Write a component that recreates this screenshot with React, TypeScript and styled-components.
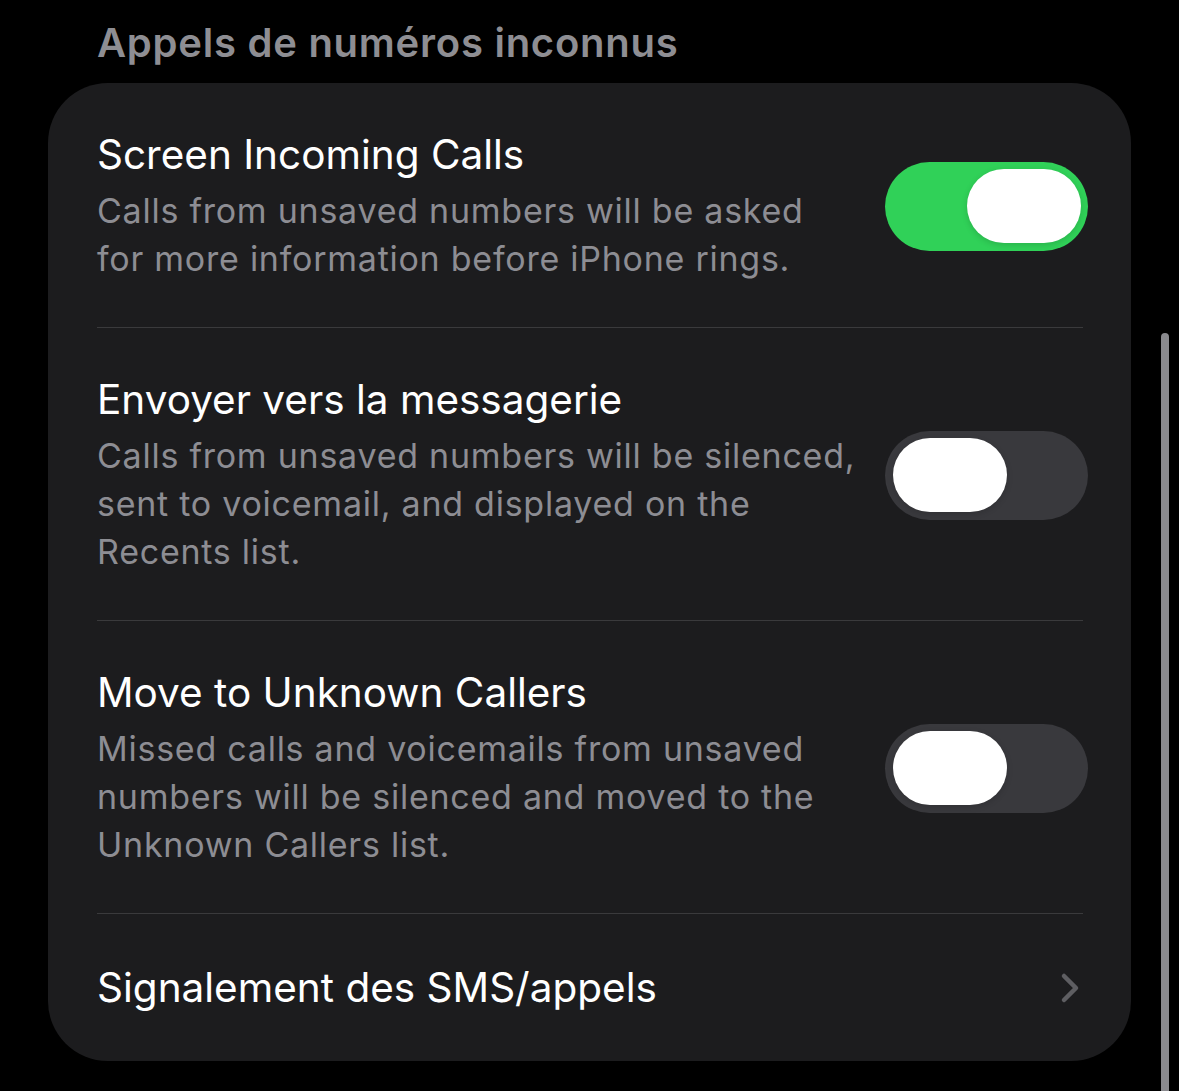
import React from "react";
import styled, { createGlobalStyle } from "styled-components";

const Global = createGlobalStyle`
  html, body { margin: 0; padding: 0; background: #000; }
  body { font-family: Inter, "Noto Sans", "Liberation Sans", sans-serif; -webkit-font-smoothing: antialiased; }
`;

const Page = styled.div`
  position: relative;
  width: 1179px;
  height: 1091px;
  overflow: hidden;
  background: #000;
  padding: 18px 48px 0 48px;
  box-sizing: border-box;
`;

const SectionHeader = styled.div`
  padding-left: 49px;
  font-size: 40px;
  line-height: 50px;
  font-weight: 600;
  color: #8e8e93;
  margin-bottom: 15px;
  letter-spacing: 0.75px;
`;

const Card = styled.div`
  width: 1083px;
  background: #1c1c1e;
  border-radius: 60px;
  display: flex;
  flex-direction: column;
`;

const Row = styled.div<{ $link?: boolean }>`
  display: flex;
  align-items: center;
  padding: ${(p) => (p.$link ? "0 51px 0 49px" : "46px 43px 44px 49px")};
  height: ${(p) => (p.$link ? "147px" : "auto")};
  box-sizing: border-box;
`;

const Separator = styled.div`
  height: 1px;
  background: #3a3a3c;
  margin: 0 48px 0 49px;
`;

const RowBody = styled.div`
  flex: 1;
  display: flex;
  flex-direction: column;
  gap: 6px;
`;

const Title = styled.div`
  font-size: 40.5px;
  line-height: 52px;
  color: #ffffff;
  font-weight: 400;
`;

const Desc = styled.div`
  font-size: 34px;
  line-height: 48px;
  color: #8d8d93;
  font-weight: 400;
  letter-spacing: 0.75px;
  white-space: nowrap;
`;

const Track = styled.div<{ $on: boolean }>`
  width: 203px;
  height: 89px;
  border-radius: 45px;
  background: ${(p) => (p.$on ? "#30d158" : "#39393d")};
  display: flex;
  align-items: center;
  justify-content: ${(p) => (p.$on ? "flex-end" : "flex-start")};
  padding: 0 7px 0 8px;
  box-sizing: border-box;
  flex-shrink: 0;
`;

const Knob = styled.div`
  width: 114px;
  height: 74px;
  border-radius: 37px;
  background: #ffffff;
  box-shadow: 0 2px 6px rgba(0, 0, 0, 0.15);
`;

const Scrollbar = styled.div`
  position: absolute;
  left: 1161px;
  top: 333px;
  width: 8px;
  height: 800px;
  border-radius: 4px;
  background: #8a8a8e;
`;

const Toggle = ({ on }: { on: boolean }) => (
  <Track $on={on}>
    <Knob />
  </Track>
);

const Chevron = () => (
  <svg width="20" height="32" viewBox="0 0 20 32">
    <path d="M4 4 L16 16 L4 28" fill="none" stroke="#5e5e62" strokeWidth="4.5" strokeLinecap="round" strokeLinejoin="round" />
  </svg>
);

export default function App() {
  return (
    <Page>
      <Global />
      <SectionHeader>Appels de numéros inconnus</SectionHeader>
      <Card>
        <Row>
          <RowBody>
            <Title>Screen Incoming Calls</Title>
            <Desc>
              Calls from unsaved numbers will be asked
              <br />
              for more information before iPhone rings.
            </Desc>
          </RowBody>
          <Toggle on={true} />
        </Row>
        <Separator />
        <Row>
          <RowBody>
            <Title>Envoyer vers la messagerie</Title>
            <Desc>
              Calls from unsaved numbers will be silenced,
              <br />
              sent to voicemail, and displayed on the
              <br />
              Recents list.
            </Desc>
          </RowBody>
          <Toggle on={false} />
        </Row>
        <Separator />
        <Row>
          <RowBody>
            <Title>Move to Unknown Callers</Title>
            <Desc>
              Missed calls and voicemails from unsaved
              <br />
              numbers will be silenced and moved to the
              <br />
              Unknown Callers list.
            </Desc>
          </RowBody>
          <Toggle on={false} />
        </Row>
        <Separator />
        <Row $link>
          <RowBody>
            <Title>Signalement des SMS/appels</Title>
          </RowBody>
          <Chevron />
        </Row>
      </Card>
      <Scrollbar />
    </Page>
  );
}
